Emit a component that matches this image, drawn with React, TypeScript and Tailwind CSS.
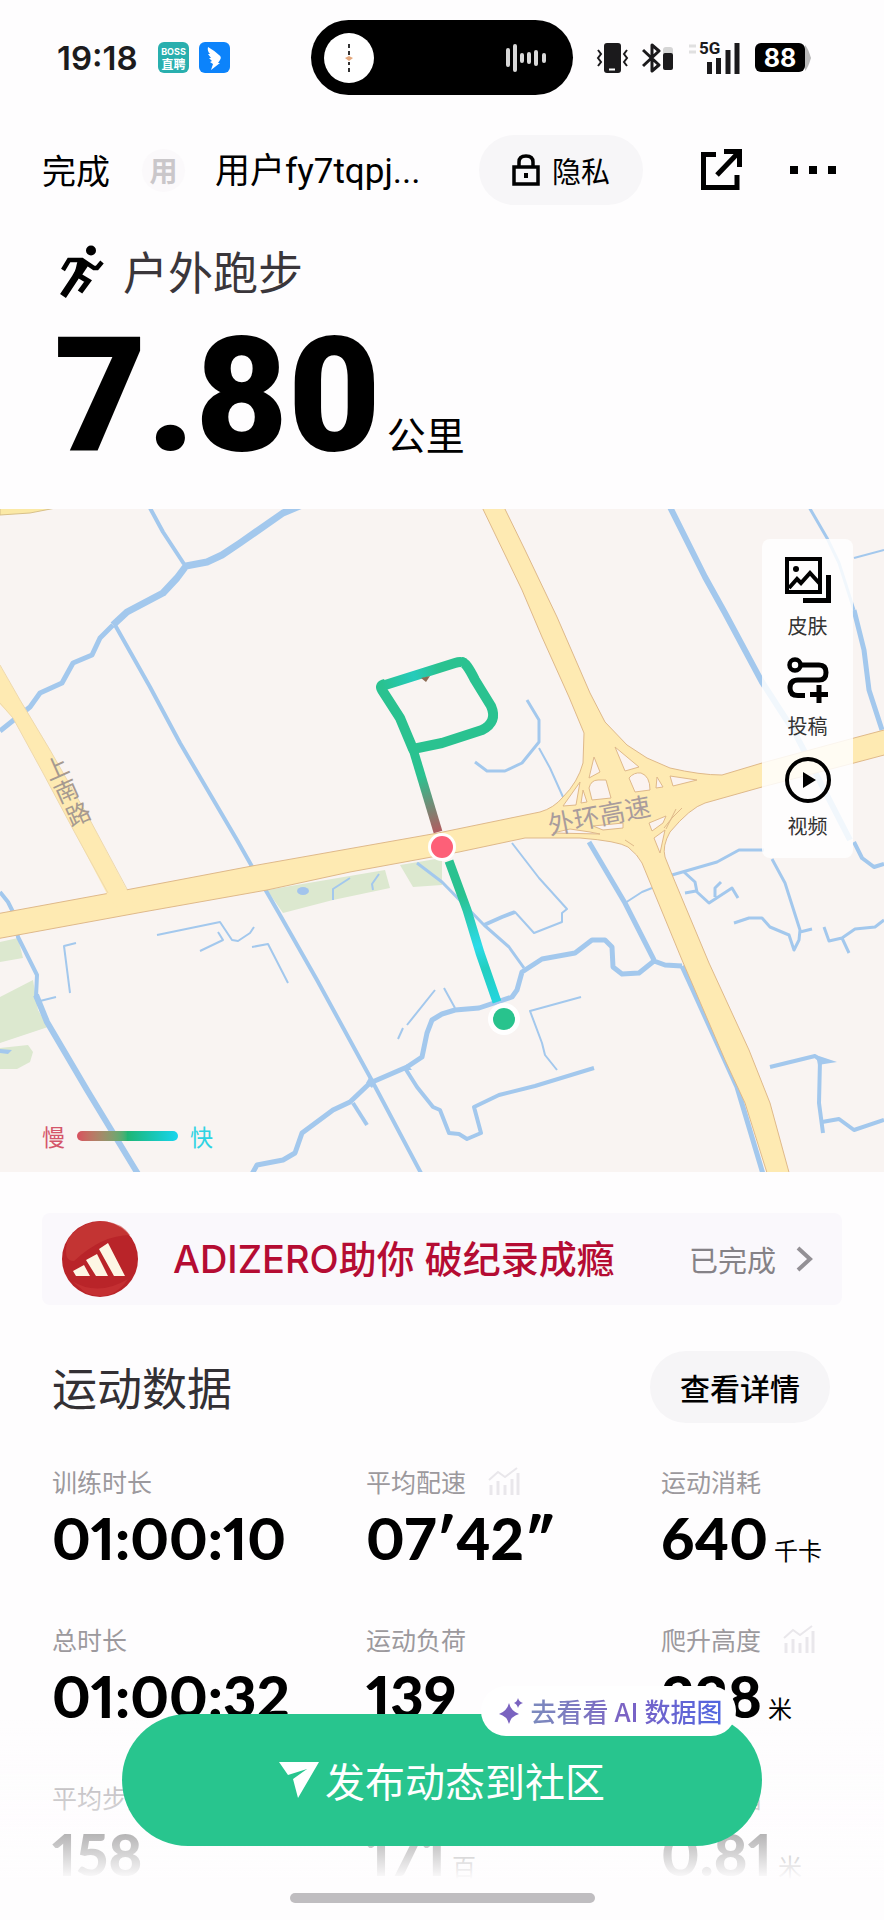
import type { ReactNode } from 'react';

const rivers: { d: string; w: number }[] = [
  { d: 'M150 508L163 532L184 564', w: 4 },
  { d: 'M302 505L283 513L240 543L222 555L207 562L186 566L177 578L163 593L127 612L113 625', w: 7 },
  { d: 'M113 625L100 638L92 655L73 663L62 683L40 693L30 707L0 731', w: 5 },
  { d: 'M115 625L150 687L180 743L237 840L250 863L280 915L317 980L370 1077L422 1175', w: 4 },
  { d: 'M0 892L8 902L14 914L18 937L37 975L36 997L47 1022', w: 4 },
  { d: 'M36 995L47 1022L87 1090L138 1174', w: 6 },
  { d: 'M252 1174L257 1165L283 1160L295 1153L302 1133L333 1110L350 1102L370 1083L407 1067L422 1057L427 1033L432 1020L442 1014L455 1010L479 1008L512 997L517 990L522 972L542 959L575 953L592 940L605 940L612 947L613 967L622 974L639 973L654 961L665 965L682 966', w: 5 },
  { d: 'M682 966L693 990L737 1087L763 1174', w: 5 },
  { d: 'M405 1068L417 1087L433 1107L440 1110L449 1133L459 1134L467 1139L481 1133L474 1107L499 1095L535 1086L594 1068', w: 4 },
  { d: 'M353 1103L367 1125', w: 4 },
  { d: 'M417 863L442 882L484 925L509 947L524 968', w: 3 },
  { d: 'M484 925L502 917L515 912L534 933L562 922L562 913L567 909L539 878L512 843', w: 2 },
  { d: 'M484 925L502 917L515 912', w: 4 },
  { d: 'M589 842L625 903L654 960', w: 5 },
  { d: 'M625 903L642 892L652 888', w: 2 },
  { d: 'M539 748L550 768L563 797', w: 2 },
  { d: 'M527 700L539 720L539 742L522 763L505 771L487 771L475 762', w: 3 },
  { d: 'M670 507L705 577L725 613L762 682L795 733L850 840', w: 6 },
  { d: 'M809 507L827 538L839 563L854 610', w: 3 },
  { d: 'M854 610L864 650L869 690L882 730', w: 5 },
  { d: 'M854 558L884 550', w: 2 },
  { d: 'M672 875L717 862L739 850L764 850', w: 3 },
  { d: 'M772 859L785 883L800 930L799 940L794 950L789 935L770 927L762 918L749 918L734 923M800 932L812 929', w: 3 },
  { d: 'M824 927L829 941L842 938L855 929L875 927L884 920M842 938L849 953', w: 3 },
  { d: 'M854 842L862 858L874 867L884 864', w: 4 },
  { d: 'M684 872L695 882L697 892L709 903L732 888L738 898M715 897L715 888L721 882M685 893L696 891', w: 3 },
  { d: 'M770 1067L815 1056L820 1060L819 1103L823 1133M822 1122L839 1119L854 1130L884 1120', w: 4 },
  { d: 'M581 997L530 1011L542 1043L545 1055L557 1070', w: 2 },
  { d: 'M157 935L220 922L232 940L238 941L250 933L254 927M200 951L223 940L218 932', w: 2 },
  { d: 'M252 947L268 944L288 983', w: 2 },
  { d: 'M76 943L64 946L70 993M40 1001L56 997', w: 2 },
  { d: 'M435 990L407 1025M403 1028L398 1039M444 988L455 1008', w: 2 },
  { d: 'M333 900L333 889L350 878M373 890L372 884L379 874', w: 2 },
];

const greens = [
  'M267 890L385 870L390 888L333 900L283 913Z',
  'M400 865L442 858L442 885L413 887Z',
  'M0 942L18 938L23 958L0 962Z',
  'M0 997L33 980L38 1010L48 1027L0 1043Z',
  'M0 1048L28 1045L33 1052L30 1062L17 1069L0 1069Z',
];

const highway =
  'M-4 914L110 893L252 866L438 833L540 812Q554 808 563 797Q578 782 583 763L584 733L569 697L542 637L522 590L481 505H503L525 550L557 617L590 693L605 722L627 745L647 758L670 768Q700 775 722 775L762 763L854 738L888 729V754L854 763L762 787L705 803Q690 808 670 832Q662 846 665 857L673 877L709 963L749 1050L770 1103L790 1176H768L745 1103L725 1060L682 960L642 863Q638 855 628 847Q618 841 580 838H525L459 852L350 872L267 890L143 912L-4 939Z';

const roadGaps = [
  'M594 757L600 772L589 778Z',
  'M615 747L639 767L625 771Z',
  'M629 778Q634 772 641 773Q650 776 650 790L635 792Z',
  'M592 800L589 788Q591 780 598 780H606L611 798Z',
  'M657 777L663 787L656 788Z',
  'M670 776L697 780L673 786Z',
  'M580 782L576 805L563 806Z',
  'M583 790L587 802L581 803Z',
  'M593 826L623 823V828L603 830Z',
  'M649 823L666 816L663 823L652 831Z',
  'M654 838L665 830L660 853Z',
  'M553 833L570 829L590 832L600 834Z',
];

function RouteMap() {
  return (
    <svg
      viewBox="0 509 884 663"
      className="block w-full h-auto bg-[#f9f4f2] font-['Noto_Sans_CJK_SC',sans-serif]"
      role="img"
      aria-label="跑步路线"
    >
      <defs>
        <linearGradient id="legUp" gradientUnits="userSpaceOnUse" x1="413" y1="749" x2="440" y2="838">
          <stop offset="0.3" stopColor="#2ac290" />
          <stop offset="1" stopColor="#c0505a" />
        </linearGradient>
        <linearGradient id="legDown" gradientUnits="userSpaceOnUse" x1="449" y1="860" x2="498" y2="1004">
          <stop offset="0" stopColor="#2ac290" />
          <stop offset="0.25" stopColor="#2ac290" />
          <stop offset="0.6" stopColor="#2bdbe9" />
          <stop offset="0.75" stopColor="#22cfc0" />
          <stop offset="1" stopColor="#25d5e0" />
        </linearGradient>
        <linearGradient id="legTop" gradientUnits="userSpaceOnUse" x1="382" y1="685" x2="462" y2="662">
          <stop offset="0" stopColor="#2ac290" />
          <stop offset="0.4" stopColor="#25cbbb" />
          <stop offset="0.7" stopColor="#2ac290" />
        </linearGradient>
      </defs>

      {greens.map(d => (
        <path key={d} d={d} fill="#dce8cf" />
      ))}
      <g fill="none" stroke="#a3c8ed" strokeLinejoin="round">
        {rivers.map(r => (
          <path key={r.d} d={r.d} strokeWidth={r.w} />
        ))}
      </g>
      <path d="M816 1055L837 1062L818 1065ZM407 1064L412 1070L402 1070ZM366 1083L370 1076L376 1081L372 1088ZM0 1049L12 1050L8 1054L0 1053Z" fill="#a3c8ed" />
      <ellipse cx="303" cy="891" rx="6" ry="4" fill="#a3c4ec" />

      <path d="M0 506H66L30 513L0 515Z" fill="#fbe9a6" stroke="#d8c08a" strokeWidth="1" />
      <path d={highway} fill="#feeab2" stroke="#dfb98a" strokeWidth="1" />
      <path d="M-2 662L20 700L50 750L90 820L128 892L136 910L122 914L108 896L75 833L43 773L13 718L-2 702Z" fill="#feeab2" />
      <path d="M0 665L20 700L50 750L90 820L127 889M0 703L13 718L43 773L75 833L108 893" fill="none" stroke="#efd9ac" strokeWidth="1" />
      <g fill="#fbf3f0" stroke="#dfb98a" strokeWidth="1">
        {roadGaps.map(d => (
          <path key={d} d={d} />
        ))}
      </g>
      <path d="M682 808L672 818L664 828M676 809L666 829M625 840L634 846" fill="none" stroke="#dfb98a" strokeWidth="1" />

      <g fill="#a99c9c" fontSize="26">
        <text transform="translate(550 835) rotate(-11)">外环高速</text>
      </g>
      <g fill="#a69a90" fontSize="24" textAnchor="middle">
        <text transform="translate(60 776) rotate(-24)">上</text>
        <text transform="translate(70 799) rotate(-24)">南</text>
        <text transform="translate(82 822) rotate(-24)">路</text>
      </g>

      <g fill="none" strokeWidth="10" strokeLinejoin="round">
        <path d="M413 749L438 832" stroke="url(#legUp)" strokeWidth="9" />
        <path d="M462 662Q466 662 475 680L491 706Q498 722 482 730L442 743L413 749L400 718L382 690Q379 685 385 684" stroke="#2ac290" />
        <path d="M382 686L455 663Q461 661 464 663" stroke="url(#legTop)" />
        <path d="M449 861L467 910L480 953L497 1002" stroke="url(#legDown)" strokeWidth="9" />
      </g>
      <path d="M421 678L430 676L426 682Z" fill="#8d6b54" />
      <circle cx="442" cy="847" r="14" fill="#fff" />
      <circle cx="442" cy="847" r="11" fill="#fd6078" />
      <circle cx="504" cy="1019" r="16" fill="#fff" />
      <circle cx="504" cy="1019" r="11" fill="#28c38d" />
    </svg>
  );
}

function MapTool({ label, children }: { label: string; children: ReactNode }) {
  return (
    <button className="flex flex-col items-center text-[20px] leading-[30px] text-[#333]">
      {children}
      <span className="mt-2">{label}</span>
    </button>
  );
}

function TrendIcon() {
  return (
    <svg width="32" height="28" viewBox="0 0 32 28" fill="none" stroke="#e9e7eb" strokeWidth="3">
      <path d="M3 28V18M10 28V14M17 28V18M24 28V12M30 28V6" />
      <path d="M1 13L10 5L17 10L29 1" strokeWidth="2" />
    </svg>
  );
}

interface Stat {
  label: string;
  value: string;
  unit?: string;
  trend?: boolean;
}

const stats: Stat[] = [
  { label: '训练时长', value: '01:00:10' },
  { label: '平均配速', value: '07′42″', trend: true },
  { label: '运动消耗', value: '640', unit: '千卡' },
  { label: '总时长', value: '01:00:32' },
  { label: '运动负荷', value: '139' },
  { label: '爬升高度', value: '228', unit: '米', trend: true },
  { label: '平均步频', value: '158' },
  { label: '平均心率', value: '171', unit: '百' },
  { label: '平均步幅', value: '0.81', unit: '米' },
];

function StatusBar() {
  return (
    <div className="relative flex items-center justify-between h-[115px] pl-[57px] pr-[73px]">
      <div className="flex items-center">
        <span className="font-['Inter',sans-serif] font-semibold text-[33px] leading-10 text-[#1c1b1d] w-[101px]">19:18</span>
        <div className="flex flex-col items-center justify-center size-[31px] rounded-md bg-[#29afae] text-white font-bold">
          <span className="font-['Inter',sans-serif] text-[9px] leading-[11px]">BOSS</span>
          <span className="text-[12px] leading-[13px]">直聘</span>
        </div>
        <div className="flex items-center justify-center ml-[10px] size-[31px] rounded-md bg-[#0c83fb]">
          <svg width="17" height="24" viewBox="0 0 17 24" fill="#fff">
            <path d="M2 1Q9 5 13 9Q16 11 14 14L12 17H14L5 24L7 18L4 16L6 15L3 12L5 12L2 8L4 8Q1 5 2 1Z" />
          </svg>
        </div>
      </div>

      <div className="absolute left-1/2 top-5 -translate-x-1/2 flex items-center justify-between w-[262px] h-[75px] rounded-full bg-black pl-[13px] pr-[25px]">
        <svg width="50" height="50" viewBox="0 0 50 50">
          <circle cx="25" cy="25" r="25" fill="#fff" />
          <path d="M25 11V15M25 18V22M25 29V32M25 35V39" stroke="#333" strokeWidth="2" />
          <path d="M21 25L25 23L29 25L25 28Z" fill="#e3a77c" />
        </svg>
        <svg width="42" height="28" viewBox="0 0 42 28" stroke="#d8d8d8" strokeWidth="4" strokeLinecap="round">
          <path d="M2 6V21M9 2V26M16 11V17M23 10V18M30 8V20M38 11V17" />
        </svg>
      </div>

      <div className="flex items-center font-['Inter',sans-serif]">
        <svg width="33" height="32" viewBox="0 0 33 32" fill="none" stroke="#1b1a1c" strokeWidth="2">
          <rect x="8" y="1" width="17" height="30" rx="3" fill="#1b1a1c" stroke="none" />
          <path d="M13 27.500H19" stroke="#fff" />
          <path d="M2 8L5 12L2 16L5 20L2 24M31 8L28 12L31 16L28 20L31 24" />
        </svg>
        <svg className="ml-[13px]" width="32" height="32" viewBox="0 0 32 32" fill="none" stroke="#1b1a1c" strokeWidth="3">
          <path d="M1 8L17 23L10 29V3L17 9L1 24" strokeLinejoin="round" />
          <rect x="21" y="5" width="10" height="8" rx="3" fill="#d5d5d5" stroke="none" />
          <rect x="21" y="11" width="10" height="17" rx="2" fill="#1b1a1c" stroke="none" />
        </svg>
        <div className="relative ml-[14px] w-[52px] h-8">
          <svg width="52" height="32" viewBox="0 0 52 32" stroke="#1b1a1c" strokeWidth="5">
            <path d="M21.500 32V20M30.500 32V16M40 32V8M49 32V1" />
            <path d="M1 4H8M1 10H8" stroke="#e0e0e0" strokeWidth="3" />
          </svg>
          <span className="absolute left-[11px] -top-1 font-['Roboto',sans-serif] text-[17px] leading-5 font-bold text-[#1b1a1c]">5G</span>
        </div>
        <div className="ml-[15px] flex items-center justify-center w-[50px] h-[29px] rounded-md bg-black text-white font-bold text-[25px] leading-7">88</div>
        <svg width="6" height="26" viewBox="0 0 6 26" fill="#b9b9b9">
          <path d="M0 0Q3 3 6 13Q3 23 0 26Z" />
        </svg>
      </div>
    </div>
  );
}

export default function App() {
  return (
    <div className="min-h-screen overflow-hidden bg-[#fefdfe] text-black font-['Noto_Sans_CJK_SC',sans-serif]">
      <StatusBar />

      <header className="flex items-center h-[110px] pl-[42px] pr-[48px] text-[34px] leading-[50px]">
        <button>完成</button>
        <div className="ml-8 flex items-center justify-center size-[43px] rounded-full bg-[#fbf9fb] text-[28px] font-bold text-[#cac7ca]">用</div>
        <span className="ml-[30px] flex-1 whitespace-nowrap text-[35px] leading-[50px] pt-1 font-['Roboto','Noto_Sans_CJK_SC',sans-serif]">用户fy7tqpj...</span>
        <button className="flex items-center h-[70px] rounded-full bg-[#f7f6f8] px-[33px] text-[29px]">
          <svg className="mr-[12px]" width="28" height="32" viewBox="0 0 28 32" fill="none" stroke="#000" strokeWidth="3.500">
            <path d="M2 13H26V30H2ZM7 13V8Q7 2 14 2Q21 2 21 8V13" />
            <rect x="12" y="19" width="4" height="5" fill="#000" stroke="none" />
          </svg>
          隐私
        </button>
        <button className="ml-[58px]" aria-label="分享">
          <svg className="block" width="42" height="42" viewBox="0 0 42 42" fill="none" stroke="#000" strokeWidth="5">
            <path d="M15 5.500H2.500V38.500H36V26" />
            <path d="M23 2.500H38.500V18M38 3L16 26" />
          </svg>
        </button>
        <button className="ml-[47px] flex gap-[11px]" aria-label="更多">
          <span className="size-2 bg-black" />
          <span className="size-2 bg-black" />
          <span className="size-2 bg-black" />
        </button>
      </header>

      <section className="px-[54px] pt-4 pb-[48px]">
        <h1 className="flex items-center h-[60px] text-[45px] leading-[60px] text-[#3a363a]">
          <svg className="ml-[6px] mr-[18px]" width="45" height="53" viewBox="0 0 45 53" fill="none" stroke="#000">
            <circle cx="31" cy="5.500" r="5" fill="#000" stroke="none" />
            <path d="M3 25L9 15H22L34 23L37 23L42 17" strokeWidth="4.500" />
            <path d="M24 17L15 33L3 51" strokeWidth="7" />
            <path d="M18 14L28 21L20 33L14 31Z" fill="#000" stroke="none" />
            <path d="M18 30L28 36L20 47" strokeWidth="5.500" />
          </svg>
          户外跑步
        </h1>
        <div className="flex items-baseline h-[160px] pt-5">
          <span className="font-['Roboto',sans-serif] font-black text-[160px] leading-[150px]">7.80</span>
          <span className="ml-[6px] text-[39px] leading-[50px]">公里</span>
        </div>
      </section>

      <section className="relative">
        <RouteMap />
        <div className="absolute top-[30px] right-[31px] flex flex-col items-center gap-4 w-[91px] pt-[18px] pb-[17px] rounded-lg bg-white/85">
          <MapTool label="皮肤">
            <svg width="46" height="46" viewBox="0 0 46 46" fill="none" stroke="#000" strokeWidth="4">
              <path d="M2 2H35V35H2Z" />
              <circle cx="11" cy="12" r="3" fill="#000" stroke="none" />
              <path d="M4 31L12 22L16 26L25 16L35 27" />
              <path d="M43.500 18V43.500H18" strokeWidth="5" />
            </svg>
          </MapTool>
          <MapTool label="投稿">
            <svg width="46" height="46" viewBox="0 0 46 46" fill="none" stroke="#000" strokeWidth="5">
              <circle cx="10" cy="8" r="5.500" strokeWidth="4.500" />
              <path d="M16 8H34Q41 8 41 15.500Q41 23 34 23H13Q5 23 5 31Q5 38.500 13 38.500H20" />
              <path d="M34 28V46M25 37.500H43" />
            </svg>
          </MapTool>
          <MapTool label="视频">
            <svg width="46" height="46" viewBox="0 0 46 46" fill="none" stroke="#000" strokeWidth="4">
              <circle cx="23" cy="23" r="21" />
              <path d="M18 15L31 23L18 31Z" fill="#000" stroke="none" />
            </svg>
          </MapTool>
        </div>
        <div className="absolute left-[42px] bottom-5 flex items-center text-[23px] leading-8">
          <span className="text-[#d4566a]">慢</span>
          <span className="mx-3 w-[101px] h-[10px] rounded-full bg-linear-to-r from-[#d84f5f] via-[#1fb574] to-[#1bd5ee]" />
          <span className="text-[#2fd3e3]">快</span>
        </div>
      </section>

      <a href="#adizero" className="mx-[42px] mt-[41px] flex items-center h-[92px] rounded-lg bg-[#faf8fc] pl-5 pr-[29px]">
        <svg width="76" height="76" viewBox="0 0 76 76">
          <circle cx="38" cy="38" r="38" fill="#b92429" />
          <path d="M6 18Q20 0 42 0Q60 2 68 14Q40 14 12 40Q0 40 6 18Z" fill="#c9403a" opacity="0.6" />
          <path d="M10 60Q36 76 66 58Q50 82 24 72Z" fill="#cf3a3c" opacity="0.5" />
          <path d="M11 50L22 44L28 55H14ZM24 39L35 33L46 55H34ZM37 28L46 22L63 55H52Z" fill="#fdf6e4" />
        </svg>
        <span className="ml-[35px] flex-1 whitespace-nowrap text-[38px] leading-[50px] font-medium text-[#b50c33] font-['Inter','Noto_Sans_CJK_SC',sans-serif]">ADIZERO助你 破纪录成瘾</span>
        <span className="text-[29px] leading-10 text-[#858287]">已完成</span>
        <svg className="ml-5" width="17" height="26" viewBox="0 0 17 26" fill="none" stroke="#939095" strokeWidth="4">
          <path d="M2 2L14 13L2 24" />
        </svg>
      </a>

      <section>
        <div className="mt-[46px] flex items-center justify-between pl-[52px] pr-[54px]">
          <h2 className="text-[45px] leading-[60px] text-[#333034]">运动数据</h2>
          <button className="h-[72px] px-[30px] rounded-full bg-[#f6f5f7] text-[30px] leading-10 font-medium">查看详情</button>
        </div>
        <dl className="mt-[42px] pl-[52px] pb-[35px] grid grid-cols-[314fr_295fr_223fr] gap-y-[55px]">
          {stats.map(s => (
            <div key={s.label}>
              <dt className="flex items-center text-[25px] leading-8 h-8 text-[#9c999d]">
                <span className="mr-[22px]">{s.label}</span>
                {s.trend && <TrendIcon />}
              </dt>
              <dd className="mt-[11px] flex items-baseline h-[60px] whitespace-nowrap">
                <span className="font-['Lato',sans-serif] font-black proportional-nums text-[58px] leading-[60px]">{s.value}</span>
                {s.unit && <span className="ml-[6px] text-[24px] leading-8">{s.unit}</span>}
              </dd>
            </div>
          ))}
        </dl>
      </section>

      <div className="fixed inset-x-0 bottom-0 flex flex-col items-center pb-[17px]">
        <div className="absolute inset-x-0 bottom-0 h-[200px] bg-linear-to-b from-[#fefdfe]/0 to-[#fefdfe] to-80%" />
        <div className="relative w-[72.500%]">
          <button className="flex items-center justify-center w-full h-[132px] rounded-full bg-[#28c58e] text-white text-[40px] leading-[60px]">
            <svg className="mr-[6px]" width="40" height="36" viewBox="0 0 40 36" fill="#fff">
              <path d="M0 0H40L19 36L14 17L28 7L9 13Z" />
            </svg>
            发布动态到社区
          </button>
          <a href="#ai" className="absolute right-[26px] -top-7 flex items-center h-[50px] rounded-full bg-white pl-[18px] pr-[14px] whitespace-nowrap text-[26px] leading-9 font-medium">
            <svg className="mr-2" width="24" height="26" viewBox="0 0 24 26" fill="#7a63c0">
              <path d="M10 5Q12 13 20 16Q12 18 10 26Q8 18 0 16Q8 13 10 5ZM19 0Q20 4 24 5Q20 6 19 10Q18 6 15 5Q18 4 19 0Z" />
            </svg>
            <span className="bg-linear-to-r from-[#7c8bbd] via-[#7b62c4] to-[#4f66e0] bg-clip-text text-transparent">去看看 AI 数据图</span>
          </a>
        </div>
        <div className="relative mt-[47px] w-[305px] h-[10px] rounded-full bg-[#bfbdc0]" />
      </div>
    </div>
  );
}
